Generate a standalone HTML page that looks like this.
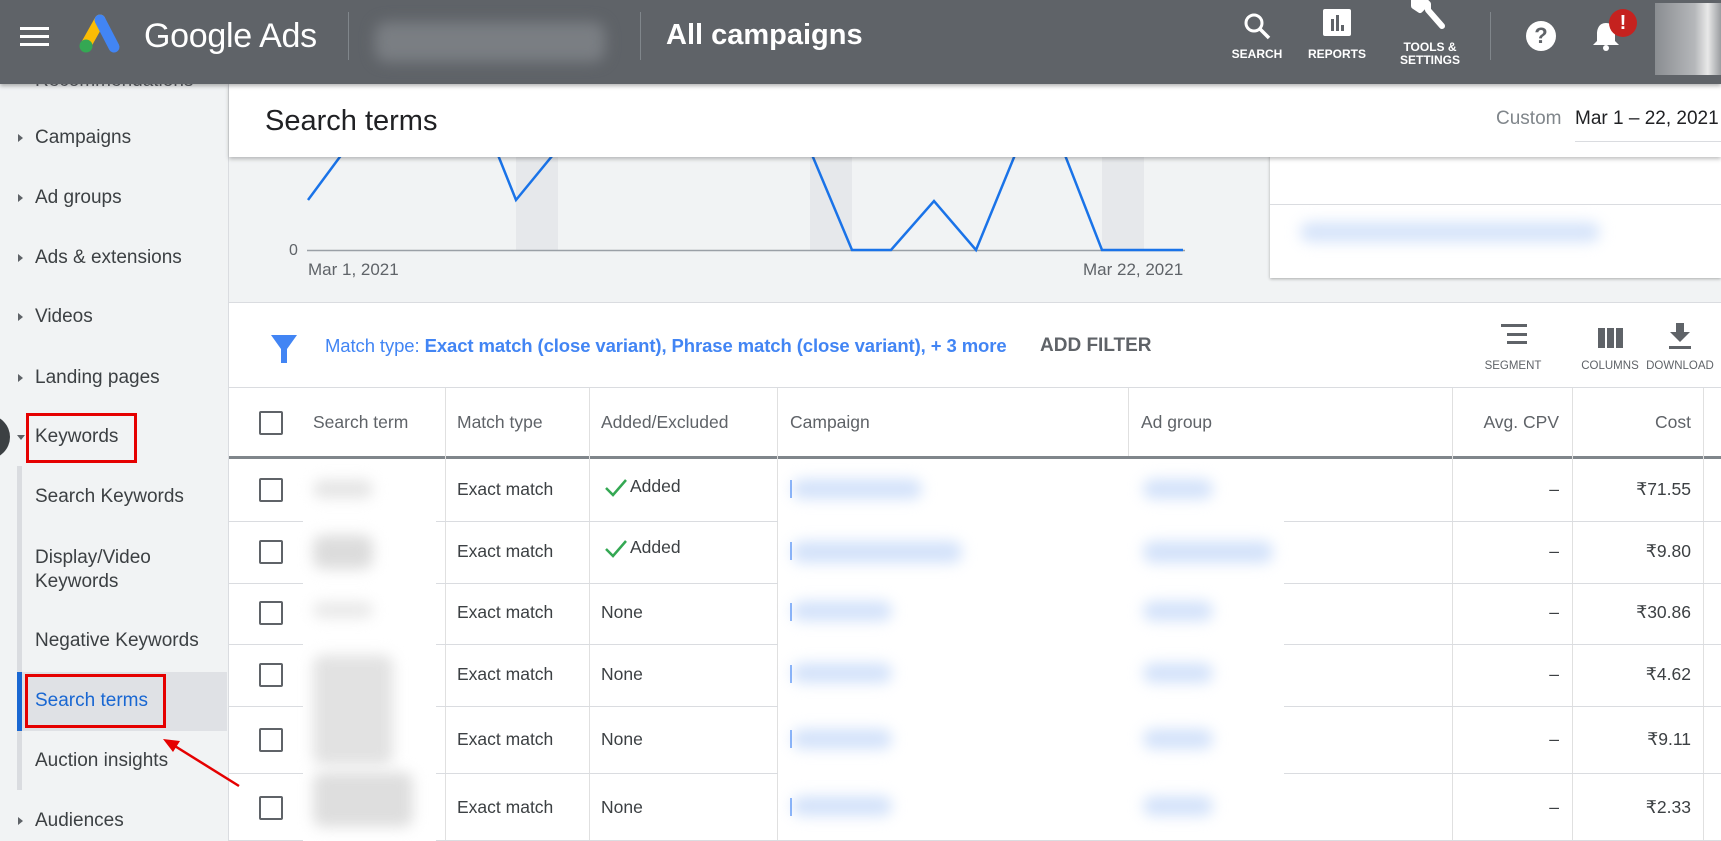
<!DOCTYPE html>
<html><head><meta charset="utf-8"><style>
*{margin:0;padding:0;box-sizing:border-box}
body{width:1721px;height:841px;overflow:hidden;position:relative;background:#f1f3f4;font-family:"Liberation Sans",Arial,sans-serif;color:#3c4043}
.a{position:absolute;white-space:nowrap}
.hdr{left:0;top:0;width:1721px;height:84px;background:#5f6368;z-index:5;box-shadow:0 2px 4px rgba(0,0,0,.3)}
.hl{color:#fff;font-size:12px;font-weight:bold;text-align:center;line-height:13px}
.side{left:0;top:84px;width:229px;height:757px;background:#f1f3f4;border-right:1px solid #dadce0}
.si{font-size:19px;color:#3c4043;left:35px}
.tri{left:18px;width:0;height:0;border-top:4px solid transparent;border-bottom:4px solid transparent;border-left:5px solid #5f6368}
.th{font-size:17.5px;color:#5f6368;top:412px}
.td{font-size:17.5px;color:#3c4043}
.vl{width:1px;background:#e0e0e0}
.hr{height:1px;background:#dadce0}
.blur{filter:blur(7px)}
</style></head><body>

<div class="a hdr">
  <div class="a" style="left:20px;top:27px;width:29px;height:3px;background:#fff"></div>
  <div class="a" style="left:20px;top:35px;width:29px;height:3px;background:#fff"></div>
  <div class="a" style="left:20px;top:43px;width:29px;height:3px;background:#fff"></div>
  <svg class="a" style="left:76px;top:12px" width="48" height="44" viewBox="0 0 48 44">
    <line x1="24" y1="8" x2="10" y2="33" stroke="#fbbc04" stroke-width="11" stroke-linecap="round"/>
    <line x1="24" y1="8" x2="38" y2="35" stroke="#4285f4" stroke-width="11" stroke-linecap="round"/>
    <circle cx="10" cy="34" r="6.5" fill="#34a853"/>
  </svg>
  <div class="a" style="left:144px;top:17px;font-size:34px;color:#fff;letter-spacing:-0.3px">Google Ads</div>
  <div class="a" style="left:348px;top:12px;width:1px;height:48px;background:#80868b"></div>
  <div class="a blur" style="left:375px;top:22px;width:230px;height:40px;background:#7a7e83;border-radius:12px"></div>
  <div class="a" style="left:640px;top:12px;width:1px;height:48px;background:#80868b"></div>
  <div class="a" style="left:666px;top:19px;font-size:29px;color:#fff;font-weight:bold">All campaigns</div>
  <svg class="a" style="left:1242px;top:11px" width="30" height="30" viewBox="0 0 30 30"><circle cx="12" cy="12" r="8" fill="none" stroke="#fff" stroke-width="3"/><line x1="18" y1="18" x2="27" y2="27" stroke="#fff" stroke-width="3.5"/></svg>
  <div class="a hl" style="left:1227px;top:48px;width:60px">SEARCH</div>
  <div class="a" style="left:1323px;top:9px;width:28px;height:27px;background:#fff;border-radius:2px"></div>
  <div class="a" style="left:1331px;top:19px;width:3px;height:12px;background:#5f6368"></div>
  <div class="a" style="left:1336px;top:15px;width:3px;height:16px;background:#5f6368"></div>
  <div class="a" style="left:1341px;top:25px;width:3px;height:6px;background:#5f6368"></div>
  <div class="a hl" style="left:1302px;top:48px;width:70px">REPORTS</div>
  <svg class="a" style="left:1410px;top:0px" width="40" height="36" viewBox="0 0 40 36"><path d="M4 0 L4 6 L10 10 L14 6 L14 0 L18 4 L18 10 L32 26" stroke="#fff" stroke-width="6" fill="none" stroke-linecap="round" stroke-linejoin="round"/><path d="M6 0 H16 V8 L10 12 L6 8Z" fill="#fff"/></svg>
  <div class="a hl" style="left:1392px;top:41px;width:76px">TOOLS &amp;<br>SETTINGS</div>
  <div class="a" style="left:1490px;top:12px;width:1px;height:48px;background:#80868b"></div>
  <div class="a" style="left:1526px;top:21px;width:30px;height:30px;border-radius:50%;background:#fff;color:#5f6368;font-weight:bold;font-size:22px;text-align:center;line-height:30px">?</div>
  <svg class="a" style="left:1591px;top:20px" width="30" height="32" viewBox="0 0 30 32"><path d="M15 3 C8 3 6 9 6 14 L6 21 L2 25 L28 25 L24 21 L24 14 C24 9 22 3 15 3Z" fill="#fff"/><circle cx="15" cy="28" r="3" fill="#fff"/></svg>
  <div class="a" style="left:1609px;top:9px;width:28px;height:28px;border-radius:50%;background:#c5221f;color:#fff;font-weight:bold;font-size:20px;text-align:center;line-height:28px">!</div>
  <div class="a" style="left:1655px;top:3px;width:66px;height:72px;background:linear-gradient(90deg,#8a8d91,#b5b7ba 60%,#e8e8e8 80%,#9a9da0)"></div>
</div>

<div class="a side">
  <div class="a si" style="top:-14px;color:#5f6368">Recommendations</div>
  <div class="a tri" style="top:50px"></div><div class="a si" style="top:43px">Campaigns</div>
  <div class="a tri" style="top:110px"></div><div class="a si" style="top:103px">Ad groups</div>
  <div class="a tri" style="top:170px"></div><div class="a si" style="top:163px">Ads &amp; extensions</div>
  <div class="a tri" style="top:229px"></div><div class="a si" style="top:222px">Videos</div>
  <div class="a tri" style="top:290px"></div><div class="a si" style="top:283px">Landing pages</div>
  <div class="a" style="left:17px;top:351px;border-left:4px solid transparent;border-right:4px solid transparent;border-top:5px solid #5f6368"></div>
  <div class="a si" style="top:342px">Keywords</div>
  <div class="a" style="left:17px;top:382px;width:5px;height:324px;background:#dadce0"></div>
  <div class="a si" style="top:402px">Search Keywords</div>
  <div class="a si" style="top:462px;line-height:24px">Display/Video<br>Keywords</div>
  <div class="a si" style="top:546px">Negative Keywords</div>
  <div class="a" style="left:17px;top:588px;width:210px;height:59px;background:#dfe1e5"></div>
  <div class="a" style="left:17px;top:588px;width:5px;height:59px;background:#1967d2"></div>
  <div class="a si" style="top:606px;color:#1967d2">Search terms</div>
  <div class="a si" style="top:666px">Auction insights</div>
  <div class="a tri" style="top:733px"></div><div class="a si" style="top:726px">Audiences</div>
  <div class="a" style="left:26px;top:329px;width:111px;height:50px;border:3px solid #e50000"></div>
  <div class="a" style="left:25px;top:590px;width:141px;height:54px;border:3px solid #e50000"></div>
  <div class="a" style="left:-34px;top:331px;width:44px;height:44px;border-radius:50%;background:#3c4043"></div>
</div>
<svg class="a" style="left:150px;top:725px;z-index:3" width="100" height="70"><line x1="89" y1="61" x2="20" y2="18" stroke="#e50000" stroke-width="2.5"/><path d="M13 14 L30 16 L23 27Z" fill="#e50000"/></svg>

<div class="a" style="left:229px;top:84px;width:1492px;height:73px;background:#fff;box-shadow:0 2px 4px rgba(0,0,0,.25);z-index:2">
  <div class="a" style="left:36px;top:21px;font-size:29px;color:#202124">Search terms</div>
  <div class="a" style="left:1267px;top:24px;font-size:19px;color:#80868b">Custom</div>
  <div class="a" style="left:1346px;top:24px;font-size:19px;color:#202124">Mar 1 – 22, 2021</div>
  <div class="a" style="left:1346px;top:57px;width:146px;height:1px;background:#dadce0"></div>
</div>

<div class="a" style="left:516px;top:157px;width:42px;height:93px;background:#e6e8eb"></div>
<div class="a" style="left:810px;top:157px;width:42px;height:93px;background:#e6e8eb"></div>
<div class="a" style="left:1102px;top:157px;width:42px;height:93px;background:#e6e8eb"></div>
<svg class="a" style="left:0;top:157px" width="1270" height="100" viewBox="0 157 1270 100">
  <line x1="307" y1="250.5" x2="1185" y2="250.5" stroke="#9aa0a6" stroke-width="1.5"/>
  <polyline fill="none" stroke="#1a73e8" stroke-width="2.5" points="308,200 345,150 496,150 516,200 557,150"/>
  <polyline fill="none" stroke="#1a73e8" stroke-width="2.5" points="810,150 852,250 891,250 934,201 976,250 1017,150"/>
  <polyline fill="none" stroke="#1a73e8" stroke-width="2.5" points="1063,150 1102,250 1183,250"/>
</svg>
<div class="a" style="left:289px;top:242px;font-size:16px;color:#5f6368">0</div>
<div class="a" style="left:308px;top:260px;font-size:17px;color:#5f6368">Mar 1, 2021</div>
<div class="a" style="left:1083px;top:260px;font-size:17px;color:#5f6368">Mar 22, 2021</div>
<div class="a" style="left:1270px;top:150px;width:451px;height:128px;background:#fff;box-shadow:0 1px 3px rgba(0,0,0,.3)">
  <div class="a" style="left:0;top:54px;width:451px;height:1px;background:#dadce0"></div>
  <div class="a blur" style="left:30px;top:72px;width:300px;height:20px;background:#d6e4fa;border-radius:10px"></div>
</div>

<div class="a" style="left:229px;top:302px;width:1492px;height:86px;background:#fff;border-top:1px solid #dadce0;border-bottom:1px solid #dadce0">
  <svg class="a" style="left:42px;top:32px" width="26" height="28" viewBox="0 0 26 28"><path d="M0 0 H26 L16 14 V28 H10 V14Z" fill="#4285f4"/></svg>
  <div class="a" style="left:96px;top:32px;font-size:18.5px;color:#4285f4;letter-spacing:-0.1px">Match type: <b>Exact match (close variant), Phrase match (close variant), + 3 more</b></div>
  <div class="a" style="left:811px;top:32px;font-size:19px;color:#5f6368;font-weight:bold">ADD FILTER</div>
  <div class="a" style="left:1272px;top:21px;width:26px;height:2.5px;background:#5f6368"></div>
  <div class="a" style="left:1278px;top:30px;width:20px;height:2.5px;background:#5f6368"></div>
  <div class="a" style="left:1278px;top:38px;width:20px;height:2.5px;background:#5f6368"></div>
  <div class="a" style="left:1254px;top:57px;width:60px;text-align:center;font-size:11.5px;color:#5f6368">SEGMENT</div>
  <div class="a" style="left:1369px;top:25px;width:7px;height:20px;background:#5f6368"></div>
  <div class="a" style="left:1378px;top:25px;width:7px;height:20px;background:#5f6368"></div>
  <div class="a" style="left:1387px;top:25px;width:7px;height:20px;background:#5f6368"></div>
  <div class="a" style="left:1346px;top:57px;width:70px;text-align:center;font-size:11.5px;color:#5f6368">COLUMNS</div>
  <svg class="a" style="left:1439px;top:20px" width="24" height="28" viewBox="0 0 24 28"><path d="M8 0 H16 V9 H22 L12 19 L2 9 H8Z" fill="#5f6368"/><rect x="1" y="23" width="22" height="3" fill="#5f6368"/></svg>
  <div class="a" style="left:1411px;top:57px;width:80px;text-align:center;font-size:11.5px;color:#5f6368">DOWNLOAD</div>
</div>

<div class="a" style="left:229px;top:388px;width:1492px;height:453px;background:#fff"></div>
<div class="a" style="left:229px;top:456px;width:1492px;height:3px;background:#80868b"></div>
<div class="a vl" style="left:445px;top:388px;height:453px"></div>
<div class="a vl" style="left:589px;top:388px;height:453px"></div>
<div class="a vl" style="left:777px;top:388px;height:453px"></div>
<div class="a vl" style="left:1128px;top:388px;height:68px"></div>
<div class="a vl" style="left:1452px;top:388px;height:453px"></div>
<div class="a vl" style="left:1572px;top:388px;height:453px"></div>
<div class="a vl" style="left:1703px;top:388px;height:453px"></div>
<div class="a hr" style="left:229px;top:521px;width:1492px"></div>
<div class="a hr" style="left:229px;top:583px;width:1492px"></div>
<div class="a hr" style="left:229px;top:644px;width:1492px"></div>
<div class="a hr" style="left:229px;top:706px;width:1492px"></div>
<div class="a hr" style="left:229px;top:773px;width:1492px"></div>
<div class="a hr" style="left:229px;top:840px;width:1492px"></div>
<div class="a" style="left:303px;top:516px;width:133px;height:325px;background:#fff"></div>
<div class="a" style="left:778px;top:516px;width:506px;height:320px;background:#fff"></div>
<div class="a blur" style="left:313px;top:480px;width:60px;height:18px;background:#e4e4e4;border-radius:10px"></div>
<div class="a blur" style="left:313px;top:535px;width:60px;height:34px;background:#dcdcdc;border-radius:10px"></div>
<div class="a blur" style="left:313px;top:602px;width:60px;height:16px;background:#e8e8e8;border-radius:10px"></div>
<div class="a blur" style="left:313px;top:655px;width:80px;height:110px;background:#e2e2e2;border-radius:10px"></div>
<div class="a blur" style="left:313px;top:772px;width:100px;height:55px;background:#dedede;border-radius:10px"></div>
<div class="a blur" style="left:792px;top:479px;width:130px;height:20px;background:#d3e2fa;border-radius:10px"></div>
<div class="a blur" style="left:792px;top:541px;width:170px;height:22px;background:#d3e2fa;border-radius:10px"></div>
<div class="a blur" style="left:792px;top:601px;width:100px;height:20px;background:#d3e2fa;border-radius:10px"></div>
<div class="a blur" style="left:792px;top:663px;width:100px;height:20px;background:#d3e2fa;border-radius:10px"></div>
<div class="a blur" style="left:792px;top:729px;width:100px;height:20px;background:#d3e2fa;border-radius:10px"></div>
<div class="a blur" style="left:792px;top:796px;width:100px;height:20px;background:#d3e2fa;border-radius:10px"></div>
<div class="a blur" style="left:1143px;top:479px;width:70px;height:20px;background:#d3e2fa;border-radius:10px"></div>
<div class="a blur" style="left:1143px;top:541px;width:130px;height:22px;background:#d3e2fa;border-radius:10px"></div>
<div class="a blur" style="left:1143px;top:601px;width:70px;height:20px;background:#d3e2fa;border-radius:10px"></div>
<div class="a blur" style="left:1143px;top:663px;width:70px;height:20px;background:#d3e2fa;border-radius:10px"></div>
<div class="a blur" style="left:1143px;top:729px;width:70px;height:20px;background:#d3e2fa;border-radius:10px"></div>
<div class="a blur" style="left:1143px;top:796px;width:70px;height:20px;background:#d3e2fa;border-radius:10px"></div>
<div class="a" style="left:790px;top:480px;width:2px;height:18px;background:#4285f4;opacity:.6"></div>
<div class="a" style="left:790px;top:542px;width:2px;height:18px;background:#4285f4;opacity:.6"></div>
<div class="a" style="left:790px;top:603px;width:2px;height:18px;background:#4285f4;opacity:.6"></div>
<div class="a" style="left:790px;top:665px;width:2px;height:18px;background:#4285f4;opacity:.6"></div>
<div class="a" style="left:790px;top:730px;width:2px;height:18px;background:#4285f4;opacity:.6"></div>
<div class="a" style="left:790px;top:798px;width:2px;height:18px;background:#4285f4;opacity:.6"></div>

<div class="a" style="left:259px;top:411px;width:24px;height:24px;border:2.5px solid #5f6368;border-radius:2px"></div>
<div class="a th" style="left:313px">Search term</div>
<div class="a th" style="left:457px">Match type</div>
<div class="a th" style="left:601px">Added/Excluded</div>
<div class="a th" style="left:790px">Campaign</div>
<div class="a th" style="left:1141px">Ad group</div>
<div class="a th" style="left:1452px;width:107px;text-align:right">Avg. CPV</div>
<div class="a th" style="left:1572px;width:119px;text-align:right">Cost</div>

<div class="a" style="left:259px;top:478px;width:24px;height:24px;border:2.5px solid #5f6368;border-radius:2px"></div>
<div class="a" style="left:259px;top:540px;width:24px;height:24px;border:2.5px solid #5f6368;border-radius:2px"></div>
<div class="a" style="left:259px;top:601px;width:24px;height:24px;border:2.5px solid #5f6368;border-radius:2px"></div>
<div class="a" style="left:259px;top:663px;width:24px;height:24px;border:2.5px solid #5f6368;border-radius:2px"></div>
<div class="a" style="left:259px;top:728px;width:24px;height:24px;border:2.5px solid #5f6368;border-radius:2px"></div>
<div class="a" style="left:259px;top:796px;width:24px;height:24px;border:2.5px solid #5f6368;border-radius:2px"></div>

<div class="a td" style="left:457px;top:479px">Exact match</div>
<div class="a td" style="left:457px;top:541px">Exact match</div>
<div class="a td" style="left:457px;top:602px">Exact match</div>
<div class="a td" style="left:457px;top:664px">Exact match</div>
<div class="a td" style="left:457px;top:729px">Exact match</div>
<div class="a td" style="left:457px;top:797px">Exact match</div>

<svg class="a" style="left:604px;top:478px" width="24" height="20"><path d="M2 10 L9 17 L22 2" stroke="#34a853" stroke-width="2.5" fill="none"/></svg>
<div class="a td" style="left:630px;top:476px">Added</div>
<svg class="a" style="left:604px;top:539px" width="24" height="20"><path d="M2 10 L9 17 L22 2" stroke="#34a853" stroke-width="2.5" fill="none"/></svg>
<div class="a td" style="left:630px;top:537px">Added</div>
<div class="a td" style="left:601px;top:602px">None</div>
<div class="a td" style="left:601px;top:664px">None</div>
<div class="a td" style="left:601px;top:729px">None</div>
<div class="a td" style="left:601px;top:797px">None</div>

<div class="a td" style="left:1452px;top:479px;width:107px;text-align:right">–</div>
<div class="a td" style="left:1452px;top:541px;width:107px;text-align:right">–</div>
<div class="a td" style="left:1452px;top:602px;width:107px;text-align:right">–</div>
<div class="a td" style="left:1452px;top:664px;width:107px;text-align:right">–</div>
<div class="a td" style="left:1452px;top:729px;width:107px;text-align:right">–</div>
<div class="a td" style="left:1452px;top:797px;width:107px;text-align:right">–</div>

<div class="a td" style="left:1572px;top:479px;width:119px;text-align:right">₹71.55</div>
<div class="a td" style="left:1572px;top:541px;width:119px;text-align:right">₹9.80</div>
<div class="a td" style="left:1572px;top:602px;width:119px;text-align:right">₹30.86</div>
<div class="a td" style="left:1572px;top:664px;width:119px;text-align:right">₹4.62</div>
<div class="a td" style="left:1572px;top:729px;width:119px;text-align:right">₹9.11</div>
<div class="a td" style="left:1572px;top:797px;width:119px;text-align:right">₹2.33</div>

</body></html>
